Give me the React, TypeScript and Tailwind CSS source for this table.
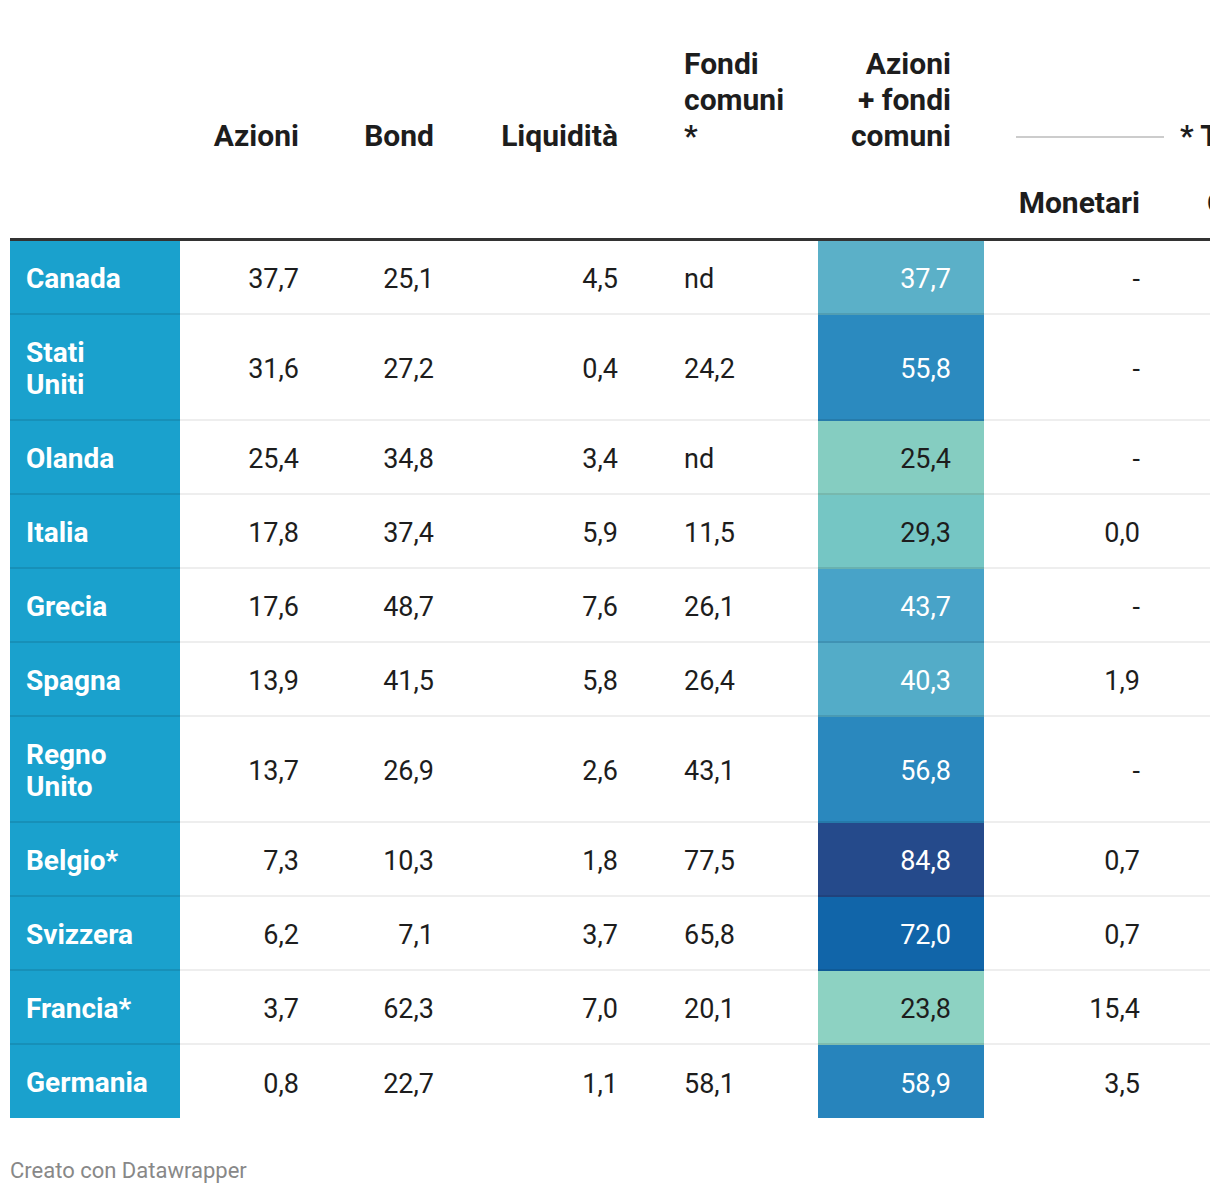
import React from 'react'

type Row = {
  name: string[]
  azioni: string
  bond: string
  liq: string
  fondi: string
  tot: string
  bg: string
  dark: boolean
  monetari: string
}

const rows: Row[] = [
  { name: ['Canada'], azioni: '37,7', bond: '25,1', liq: '4,5', fondi: 'nd', tot: '37,7', bg: 'bg-[#5bb0c8]', dark: false, monetari: '-' },
  { name: ['Stati', 'Uniti'], azioni: '31,6', bond: '27,2', liq: '0,4', fondi: '24,2', tot: '55,8', bg: 'bg-[#2b8abf]', dark: false, monetari: '-' },
  { name: ['Olanda'], azioni: '25,4', bond: '34,8', liq: '3,4', fondi: 'nd', tot: '25,4', bg: 'bg-[#85cdc1]', dark: true, monetari: '-' },
  { name: ['Italia'], azioni: '17,8', bond: '37,4', liq: '5,9', fondi: '11,5', tot: '29,3', bg: 'bg-[#75c6c4]', dark: true, monetari: '0,0' },
  { name: ['Grecia'], azioni: '17,6', bond: '48,7', liq: '7,6', fondi: '26,1', tot: '43,7', bg: 'bg-[#48a3c8]', dark: false, monetari: '-' },
  { name: ['Spagna'], azioni: '13,9', bond: '41,5', liq: '5,8', fondi: '26,4', tot: '40,3', bg: 'bg-[#53acc8]', dark: false, monetari: '1,9' },
  { name: ['Regno', 'Unito'], azioni: '13,7', bond: '26,9', liq: '2,6', fondi: '43,1', tot: '56,8', bg: 'bg-[#2a88be]', dark: false, monetari: '-' },
  { name: ['Belgio*'], azioni: '7,3', bond: '10,3', liq: '1,8', fondi: '77,5', tot: '84,8', bg: 'bg-[#254a8b]', dark: false, monetari: '0,7' },
  { name: ['Svizzera'], azioni: '6,2', bond: '7,1', liq: '3,7', fondi: '65,8', tot: '72,0', bg: 'bg-[#1165a9]', dark: false, monetari: '0,7' },
  { name: ['Francia*'], azioni: '3,7', bond: '62,3', liq: '7,0', fondi: '20,1', tot: '23,8', bg: 'bg-[#8dd2c2]', dark: true, monetari: '15,4' },
  { name: ['Germania'], azioni: '0,8', bond: '22,7', liq: '1,1', fondi: '58,1', tot: '58,9', bg: 'bg-[#2784bc]', dark: false, monetari: '3,5' },
]

export default function App() {
  return (
    <div
      className="w-[1220px] h-[1194px] bg-white text-[#1d1d1d] overflow-hidden"
      style={{ fontFamily: 'Roboto, "Liberation Sans", sans-serif' }}
    >
      <div className="ml-[10px] w-[1200px] overflow-hidden">
        <div className="w-[1500px]">
          {/* header */}
          <div className="flex font-bold text-[30px] leading-[36px] border-b-[3px] border-[#333333]">
            <div className="w-[170px] shrink-0" />
            <div className="w-[135px] shrink-0 h-[238px] flex flex-col">
              <div className="h-[154px] flex items-end justify-end pr-[16px]">Azioni</div>
            </div>
            <div className="w-[135px] shrink-0 h-[238px] flex flex-col">
              <div className="h-[154px] flex items-end justify-end pr-[16px]">Bond</div>
            </div>
            <div className="w-[184px] shrink-0 h-[238px] flex flex-col">
              <div className="h-[154px] flex items-end justify-end pr-[16px]">Liquidità</div>
            </div>
            <div className="w-[184px] shrink-0 h-[238px] flex flex-col">
              <div className="h-[154px] flex items-end pl-[50px]">
                <div>Fondi<br />comuni<br />*</div>
              </div>
            </div>
            <div className="w-[166px] shrink-0 h-[238px] flex flex-col">
              <div className="h-[154px] flex items-end justify-end pr-[33px] text-right">
                <div>Azioni<br />+ fondi<br />comuni</div>
              </div>
            </div>
            <div className="flex-1 h-[238px] flex flex-col">
              <div className="h-[154px] flex items-end pl-[32px]">
                <div className="flex items-center gap-[16px] whitespace-nowrap">
                  <div className="w-[148px] h-[2px] bg-[#cccccc] mt-[2px]" />
                  <span>* Tipologia fondi comuni</span>
                </div>
              </div>
              <div className="flex pt-[31px]">
                <div className="w-[172px] shrink-0 text-right pr-[16px]">Monetari</div>
                <div className="pl-[51px] whitespace-nowrap">Obbligazionari</div>
              </div>
            </div>
          </div>

          {/* body */}
          {rows.map((r, i) => {
            const last = i === rows.length - 1
            const line = last ? '' : 'border-b-2 border-[#eeeeee]'
            const cell = `shrink-0 flex items-center pt-[4px] ${line}`
            return (
              <div key={r.name.join(' ')} className="flex text-[27px] leading-[32px]">
                <div
                  className={`w-[170px] shrink-0 bg-[#1aa1cd] text-white font-bold text-[28px] pl-[16px] pt-[22px] ${last ? 'pb-[19px]' : 'pb-[18px] border-b-2 border-black/10'}`}
                >
                  {r.name.map((n) => (
                    <div key={n}>{n}</div>
                  ))}
                </div>
                <div className={`w-[135px] justify-end pr-[16px] ${cell}`}>{r.azioni}</div>
                <div className={`w-[135px] justify-end pr-[16px] ${cell}`}>{r.bond}</div>
                <div className={`w-[184px] justify-end pr-[16px] ${cell}`}>{r.liq}</div>
                <div className={`w-[184px] pl-[50px] ${cell}`}>{r.fondi}</div>
                <div
                  className={`w-[166px] shrink-0 flex items-center pt-[4px] justify-end pr-[33px] ${r.bg} ${last ? '' : 'border-b-2 border-black/10'} ${r.dark ? 'text-[#1d1d1d]' : 'text-white'}`}
                >
                  {r.tot}
                </div>
                <div className={`w-[172px] justify-end pr-[16px] ${cell}`}>{r.monetari}</div>
                <div className={`flex-1 ${line}`} />
              </div>
            )
          })}
        </div>
      </div>

      <div className="mt-[40px] ml-[10px] text-[22px] leading-[26px] text-[#888888]">Creato con Datawrapper</div>
    </div>
  )
}
